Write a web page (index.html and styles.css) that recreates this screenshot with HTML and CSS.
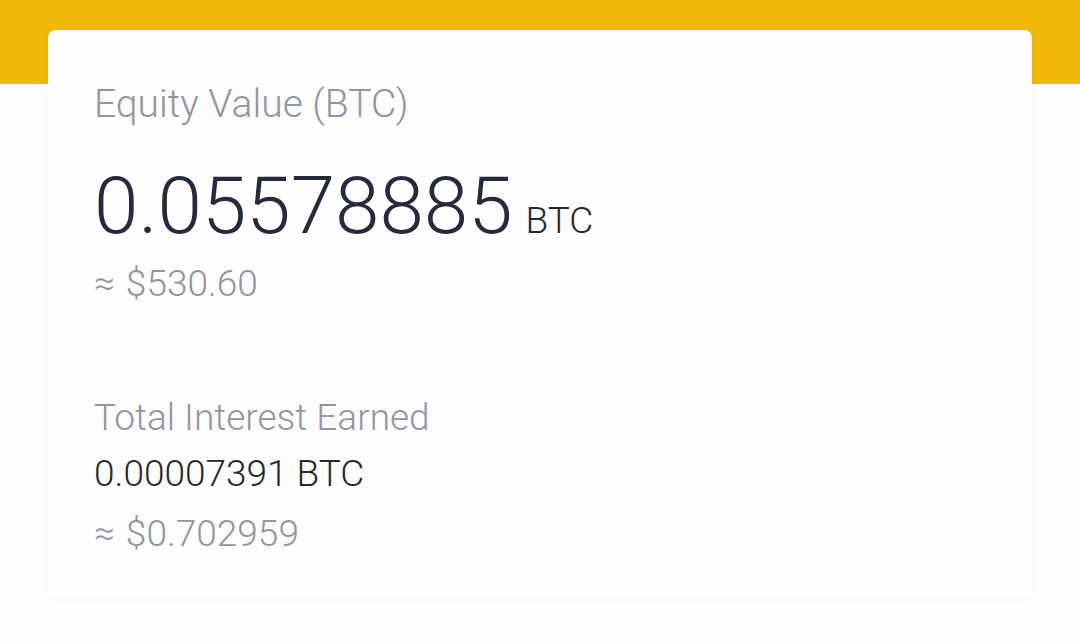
FILE: index.html
```html
<!DOCTYPE html>
<html lang="en">
<head>
    <meta charset="utf-8">
    <meta name="viewport" content="width=device-width, initial-scale=1">
    <title>Equity Value</title>
    <link rel="stylesheet" href="styles.css">
</head>
<body>

    <div class="banner"></div>

    <main class="card">
        <section class="equity">
            <h1 class="label">Equity Value (BTC)</h1>
            <p class="amount">0.05578885<span class="unit"> BTC</span></p>
            <p class="fiat"><span class="approx">≈</span> $530.60</p>
        </section>

        <section class="interest">
            <h2 class="label label-small">Total Interest Earned</h2>
            <p class="earned">0.00007391 BTC</p>
            <p class="fiat"><span class="approx">≈</span> $0.702959</p>
        </section>
    </main>

</body>
</html>
```
FILE: styles.css
```css
* {
    box-sizing: border-box;
}

body {
    margin: 0;
    background: #fefefe;
    color: #262b3b;
    font-family: "Roboto", "Liberation Sans", sans-serif;
    font-weight: 300;
}

h1, h2, p {
    margin: 0;
    font-weight: 300;
}

.banner {
    height: 84px;
    background: #f0b90b;
}

/* the card overlaps the lower part of the banner */
.card {
    position: relative;
    margin: -54px 48px 40px;
    padding: 50px 46px 36px;
    background: #fefefe;
    border-radius: 8px;
    box-shadow: 0 1px 12px rgba(0, 0, 0, 0.04);
}

.label {
    color: #9195a0;
    font-size: 39px;
    line-height: 48px;
}

.label-small {
    font-size: 37px;
}

.amount {
    margin-top: 43px;
    font-size: 80px;
    line-height: 70px;
}

.unit {
    margin-left: 4px;
    color: #25282c;
    font-size: 37px;
}

.fiat {
    color: #9195a0;
    font-size: 37px;
    line-height: 56px;
}

.approx {
    margin-right: 2px;
    font-size: 37px;
}

.earned {
    color: #25282c;
    font-size: 37px;
    line-height: 64px;
}

.interest {
    margin-top: 82px;
}
```
